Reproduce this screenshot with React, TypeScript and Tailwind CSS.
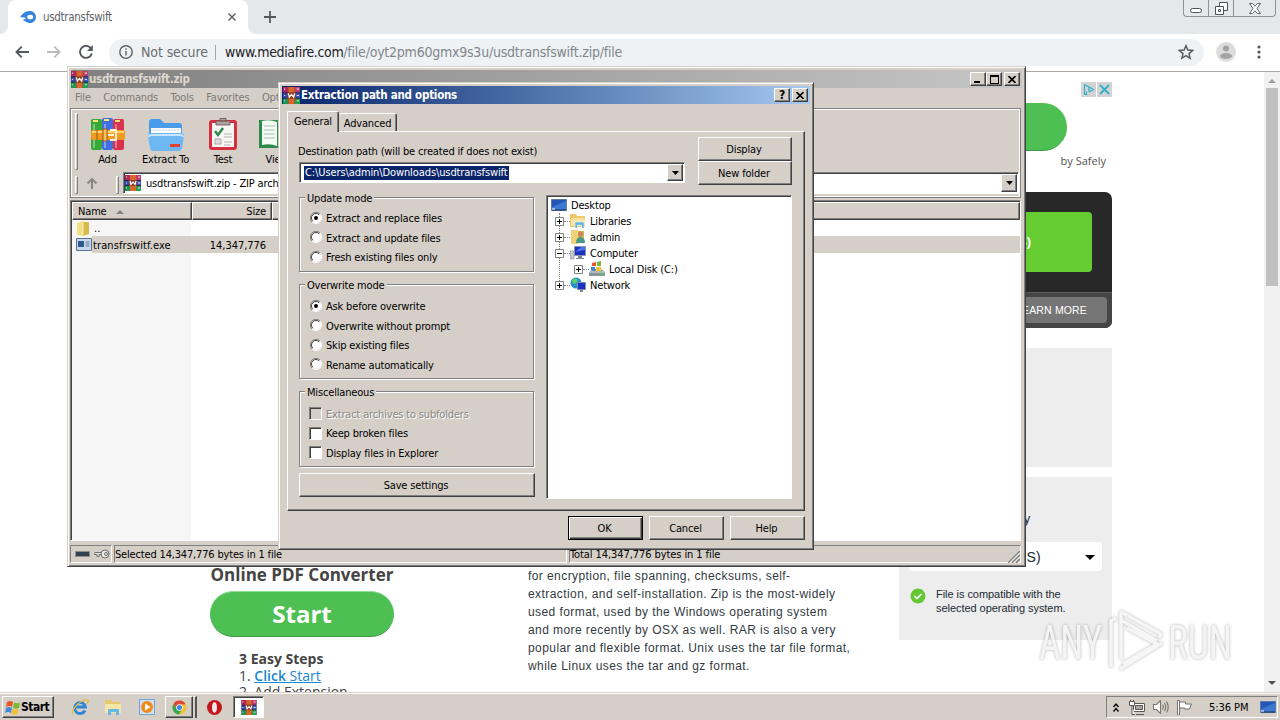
import type { ReactNode } from 'react'

const raised =
  'border border-t-white border-l-white border-r-[#404040] border-b-[#404040] shadow-[inset_-1px_-1px_0_#808080]'
const sunken =
  'border border-t-[#808080] border-l-[#808080] border-r-white border-b-white shadow-[inset_1px_1px_0_#404040]'
const thinSunken = 'border border-t-[#808080] border-l-[#808080] border-r-white border-b-white'
const frame =
  'border border-t-[#d5cfc8] border-l-[#d5cfc8] border-r-[#404040] border-b-[#404040] shadow-[inset_1px_1px_0_#fff,inset_-1px_-1px_0_#808080]'
const openSans = "[font-family:'Open_Sans',sans-serif] [font-stretch:normal] tracking-normal"
const arial = "[font-family:'Liberation_Sans',sans-serif]"

const RarIcon = ({ className = 'h-[17px] w-[17px]' }: { className?: string }) => (
  <svg viewBox="0 0 16 16" className={`shrink-0 ${className}`}>
    <rect width="16" height="16" fill="#2b2440" />
    <path d="M0 0h5v5H0z" fill="#b3285c" />
    <path d="M0 6h5v4H0z" fill="#2d4fc0" />
    <path d="M0 11h5v5H0z" fill="#1f9450" />
    <path d="M11 0h5v5h-5z" fill="#c23a72" />
    <path d="M11 6h5v4h-5z" fill="#315bd0" />
    <path d="M11 11h5v5h-5z" fill="#22a050" />
    <path d="M5 0h6v16H5z" fill="#d9662a" />
    <path d="M4 5h8v6H4z" fill="#8c3b22" />
    <path d="M5 6l1 3.500L8 7l2 2.500L11 6" fill="none" stroke="#fff" strokeWidth="1.200" />
    <path d="M1 2h1M1 8h1M1 13h1M13 2h2M13 8h2M13 13h2" stroke="#e8e0ea" />
  </svg>
)

const DownTriangle = () => (
  <svg viewBox="0 0 7 4" className="h-1 w-[7px]">
    <path d="M0 0h7L3.500 4z" fill="#000" />
  </svg>
)

const DropButton = () => (
  <span className={`flex w-4 shrink-0 items-center justify-center self-stretch bg-[#d5cfc8] ${raised}`}>
    <DownTriangle />
  </span>
)

const CaptionButton = ({ children }: { children: ReactNode }) => (
  <span className={`flex h-[14px] w-4 items-center justify-center bg-[#d5cfc8] ${raised}`}>{children}</span>
)

const CloseGlyph = () => (
  <svg viewBox="0 0 8 7" className="h-[7px] w-2">
    <path d="M.5 0l7 7M7.500 0l-7 7" stroke="#000" strokeWidth="1.600" />
  </svg>
)

const WinButton = ({ children, className = '' }: { children: ReactNode; className?: string }) => (
  <button
    type="button"
    className={`flex h-6 items-center justify-center bg-[#d5cfc8] pr-[2px] pt-px ${raised} ${className}`}
  >
    {children}
  </button>
)

/* ---------- browser ---------- */

const TabStrip = () => (
  <div className="flex h-[34px] shrink-0 items-start bg-[#e4e8eb]">
    <div className="h-[34px] w-2 bg-white">
      <div className="h-full w-full rounded-br-lg bg-[#e4e8eb]" />
    </div>
    <div className="flex h-[34px] w-60 items-center rounded-t-lg bg-white pl-3 pr-3">
      <svg viewBox="0 0 16 12" className="h-3 w-4">
        <path
          d="M0 6.500C2 3 5 0 9.500 0 13.500 0 16 2.700 16 6s-2.600 6-6 6c-3.500 0-4.500-2.500-8-3 2-.2 3.500-1 4-2C4.500 7 2 6 0 6.500z"
          fill="#3384e0"
        />
        <ellipse cx="10.200" cy="6" rx="3" ry="2.300" fill="#fff" />
      </svg>
      <span className="ml-[7px] text-[11.500px] tracking-[-0.3px] text-[#5f6368]">usdtransfswift</span>
      <svg viewBox="0 0 8 8" className="ml-auto h-2 w-2">
        <path d="M.5.5l7 7M7.500.5l-7 7" stroke="#5f6368" strokeWidth="1.500" />
      </svg>
    </div>
    <div className="h-[34px] w-2 bg-white">
      <div className="h-full w-full rounded-bl-lg bg-[#e4e8eb]" />
    </div>
    <svg viewBox="0 0 12 12" className="ml-2 mt-[11px] h-3 w-3">
      <path d="M6 0v12M0 6h12" stroke="#55595d" strokeWidth="1.800" />
    </svg>
    <div className="ml-auto mr-1 flex h-[17px] w-[93px] rounded-b border border-t-0 border-[#8e9396]">
      <span className="flex w-[25px] items-center justify-center border-r border-[#8e9396]">
        <span className="mt-1 h-[5px] w-3 rounded-sm border border-[#4b5157] bg-white" />
      </span>
      <span className="flex w-[25px] items-center justify-center border-r border-[#8e9396]">
        <svg viewBox="0 0 13 13" className="h-[13px] w-[13px]" fill="#fff" stroke="#4b5157">
          <path d="M4.500.5h8v8h-8z" />
          <path d="M.5 4.500h8v8h-8zM3.500 7.500h2v2h-2z" />
        </svg>
      </span>
      <span className="flex flex-1 items-center justify-center">
        <svg viewBox="0 0 12 11" className="h-[11px] w-3">
          <path
            d="M.5.5h3L6 3.200 8.500.5h3L8 5.500l3.500 5h-3L6 7.800 3.500 10.500h-3L4 5.500z"
            fill="#fff"
            stroke="#4b5157"
            strokeWidth=".9"
          />
        </svg>
      </span>
    </div>
  </div>
)

const AddressBar = () => (
  <div className="flex h-[38px] shrink-0 items-center border-b border-[#a9a9a9] bg-white pb-px pl-[15px]">
    <svg viewBox="0 0 14 12" className="h-3 w-[14px]" fill="none" stroke="#55595d" strokeWidth="1.800">
      <path d="M14 6H1.500M6.700.700L1.400 6l5.300 5.300" />
    </svg>
    <svg viewBox="0 0 14 12" className="ml-[18px] h-3 w-[14px]" fill="none" stroke="#b9bbbd" strokeWidth="1.800">
      <path d="M0 6h12.500M7.300.700L12.600 6l-5.300 5.300" />
    </svg>
    <svg viewBox="0 0 14 14" className="ml-[18px] h-[14px] w-[14px]">
      <path d="M12 3.500A6 6 0 1 0 12.800 8.500" fill="none" stroke="#55595d" strokeWidth="1.900" />
      <path d="M13.800 0v6H8z" fill="#55595d" />
    </svg>
    <div className="ml-4 flex h-[27px] w-[1095px] items-center rounded-full bg-[#eff2f5] pl-[10px] pr-[10px] text-[14px]">
      <svg viewBox="0 0 14 14" className="h-[14px] w-[14px]" fill="none" stroke="#5f6368" strokeWidth="1.400">
        <circle cx="7" cy="7" r="6.200" />
        <path d="M7 6v4.500M7 3.300v1.500" />
      </svg>
      <span className="ml-2 w-[67px] whitespace-nowrap tracking-[-0.1px] text-[#696d71]">Not secure</span>
      <span className="ml-[7px] h-[15px] w-px bg-[#a5a8ab]" />
      <span className="ml-[9px] whitespace-nowrap tracking-[-0.35px] text-[#202124]">
        www.mediafire.com
        <span className="tracking-[-0.23px] text-[#80868b]">/file/oyt2pm60gmx9s3u/usdtransfswift.zip/file</span>
      </span>
      <svg viewBox="0 0 24 24" className="ml-auto h-4 w-4" fill="none" stroke="#55595d" strokeWidth="2.200">
        <path d="M12 2.500l2.800 6.600 7.200.6-5.500 4.700 1.700 7L12 17.600l-6.200 3.800 1.700-7L2 9.700l7.200-.6z" />
      </svg>
    </div>
    <svg viewBox="0 0 20 20" className="ml-3 h-5 w-5">
      <circle cx="10" cy="10" r="10" fill="#dcdcdc" />
      <circle cx="10" cy="6.500" r="3" fill="#a3a3a3" />
      <ellipse cx="10" cy="14" rx="6" ry="3" fill="#a3a3a3" />
    </svg>
    <svg viewBox="0 0 4 14" className="ml-[21px] h-[14px] w-1" fill="#55595d">
      <circle cx="2" cy="2" r="1.600" />
      <circle cx="2" cy="7" r="1.600" />
      <circle cx="2" cy="12" r="1.600" />
    </svg>
  </div>
)

const articleLines = [
  'for encryption, file spanning, checksums, self-',
  'extraction, and self-installation. Zip is the most-widely',
  'used format, used by the Windows operating system',
  'and more recently by OSX as well. RAR is also a very',
  'popular and flexible format. Unix uses the tar file format,',
  'while Linux uses the tar and gz format.',
]

const ConverterAd = () => (
  <div className={`ml-[210px] w-[184px] shrink-0 pt-[491px] text-[#444] ${openSans}`}>
    <p className="whitespace-nowrap text-center text-[17px] font-bold leading-6">Online PDF Converter</p>
    <div className="mt-1 flex h-[46px] items-center justify-center rounded-full border-t border-b border-t-[#8fdc93] border-b-[#3f9a45] bg-[#4dbf53] text-[24px] font-bold text-white">
      Start
    </div>
    <div className="ml-[29px] mt-[14px] whitespace-nowrap text-[14px] leading-[16.500px]">
      <p className="font-bold">3 Easy Steps</p>
      <p>
        1.{' '}
        <span className="text-[#1a86cc] underline">
          <b className="font-semibold">Click</b> Start
        </span>
      </p>
      <p>2. Add Extension</p>
    </div>
  </div>
)

const SideColumn = () => (
  <div className={`ml-[49px] flex w-[213px] shrink-0 flex-col pt-[10px] ${arial}`}>
    <div className="flex justify-end gap-px">
      <svg viewBox="0 0 15 15" className="h-[15px] w-[15px]">
        <path d="M0 0h15v15H0z" fill="#d3d3d6" />
        <path d="M3.500 2.500v10h2V9.500M3.500 2.500L12.500 7.500 8 10M8 5.500V10" fill="none" stroke="#2fb1c5" strokeWidth="1.200" />
      </svg>
      <svg viewBox="0 0 15 15" className="h-[15px] w-[15px]">
        <path d="M0 0h15v15H0z" fill="#d3d3d6" />
        <path d="M3 3l9 9M12 3l-9 9" stroke="#2fb1c5" strokeWidth="1.800" />
      </svg>
    </div>
    <div className="mr-[45px] mt-[6px] h-12 rounded-full border-b border-[#3f9a45] bg-[#4dbf53]" />
    <p className={`mr-[6px] mt-[2px] text-right text-[11px] leading-4 text-[#555] ${openSans}`}>by Safely</p>
    <div className="mt-[23px] flex h-[136px] flex-col overflow-hidden rounded-[7px] bg-[#282828]">
      <div className="mr-5 mt-5 flex h-[60px] items-center justify-end rounded bg-[#65cd32] pr-[61px] text-[13px] font-bold text-white">
        (13.67MB)
      </div>
      <div className="mt-5 flex-1 border-t border-[#5c5c5c] bg-[#454545] px-[5px] pt-1">
        <div className="flex h-[26px] items-center justify-end rounded-sm bg-[#757575] pr-5 text-[10.500px] tracking-[0.15px] text-white">
          LEARN MORE
        </div>
      </div>
    </div>
    <div className="mt-5 h-[119px] bg-[#ededed]" />
    <div className="mt-[10px] h-[163px] bg-[#ededed] pl-[10px] pr-[10px] pt-[34px] text-[#222b33]">
      <p className="pr-[72px] text-right text-[13px] leading-4">Compatibility</p>
      <div className="mt-[15px] flex h-[29px] items-center rounded-sm bg-white pr-[7px] pt-px text-[14px]">
        <span className="w-[132px] text-right tracking-[0.3px]">Windows (OS)</span>
        <svg viewBox="0 0 10 5" className="ml-auto h-[5px] w-[10px]">
          <path d="M0 0h10L5 5z" fill="#000" />
        </svg>
      </div>
      <div className="mt-4 flex text-[11px] leading-[14px]">
        <svg viewBox="0 0 16 16" className="ml-px mt-px h-4 w-4">
          <circle cx="8" cy="8" r="7.500" fill="#63c832" />
          <path d="M4.500 8l2.500 2.500L11.500 6" fill="none" stroke="#fff" strokeWidth="1.700" />
        </svg>
        <p className="ml-[10px] whitespace-nowrap tracking-[-0.05px]">
          File is compatible with the
          <br />
          selected operating system.
        </p>
      </div>
    </div>
  </div>
)

const ScrollBar = () => (
  <div className="ml-auto flex w-4 shrink-0 flex-col items-center bg-[#f1f1f1]">
    <svg viewBox="0 0 8 4" className="mt-[7px] h-1 w-2">
      <path d="M4 0l4 4H0z" fill="#a0a0a0" />
    </svg>
    <div className="mt-[5px] h-[198px] w-3 bg-[#c1c1c1]" />
    <svg viewBox="0 0 8 4" className="mb-[7px] mt-auto h-1 w-2">
      <path d="M0 0h8L4 4z" fill="#505050" />
    </svg>
  </div>
)

const Watermark = () => (
  <svg
    viewBox="0 0 200 66"
    className="absolute left-[1036px] top-[608px] h-[66px] w-[200px] drop-shadow-[0_0_1.500px_rgba(0,0,0,0.3)]"
  >
    <g fill="#f4f4f4" fontFamily="Roboto, sans-serif" fontSize="49" fontWeight="400">
      <text x="3" y="51" textLength="63" lengthAdjust="spacingAndGlyphs">
        ANY
      </text>
      <text x="132" y="51" textLength="64" lengthAdjust="spacingAndGlyphs">
        RUN
      </text>
    </g>
    <g fill="none" stroke="#f6f6f6" strokeWidth="3.500" strokeLinejoin="round">
      <path d="M80 10l-5 3v46M85 51V4l40 22-2 4M91 20l30 16-34 20M85 12l36 21M84 61l42-26" />
    </g>
  </svg>
)

/* ---------- archive window ---------- */

const BooksIcon = () => (
  <svg viewBox="0 0 34 34" className="h-[34px] w-[34px]">
    <rect x="0" y="2" width="11" height="31" rx="2" fill="#38a839" />
    <rect x="11" y="1" width="11" height="32" rx="2" fill="#3f6fe0" />
    <rect x="22" y="2" width="11" height="31" rx="2" fill="#d8324e" />
    <path d="M2 4h5M13 3h5M24 4h5" stroke="#ffe270" strokeWidth="2" />
    <path d="M3 7v24M14 7v24M25 7v24" stroke="#fff" strokeOpacity=".35" strokeWidth="2" />
    <rect x="0" y="13" width="34" height="10" rx="2" fill="#f09a24" />
    <path d="M1 15h32" stroke="#ffd36b" strokeWidth="2" />
    <path d="M12 12h4v12h-4zM6 13v10" stroke="#9a5710" fill="#f7c35a" />
    <path d="M19 13h6v10h-6M17 18h6" fill="none" stroke="#fff3dc" strokeWidth="1.800" />
  </svg>
)

const FolderIcon = () => (
  <svg viewBox="0 0 36 34" className="h-[34px] w-9">
    <path d="M1 5q0-3 3-3h8l4 4h15q3 0 3 3v9H1z" fill="#4a9cea" />
    <path d="M3 11h30v10H3z" fill="#fff" />
    <path d="M5 13h26" stroke="#b9c9d8" strokeDasharray="2 1" />
    <path d="M0 19q0-3 3-3h30q3 0 3 3l-2 12q-.5 3-3.500 3h-25q-3 0-3.500-3z" fill="#6db8f4" />
    <path d="M1 20q0-2 3-2h28q3 0 3 2" fill="none" stroke="#c6e6ff" strokeWidth="2" />
    <rect x="22" y="27" width="10" height="3" fill="#e0432f" />
  </svg>
)

const TestIcon = () => (
  <svg viewBox="0 0 30 34" className="h-[34px] w-[30px]">
    <rect x="1" y="3" width="28" height="30" rx="3" fill="#d62f42" />
    <path d="M4 6h22v24H4z" fill="#f8f6f4" />
    <path d="M8 4h14v4H8zM12 1.500h6V4h-6z" fill="#a9a4a2" stroke="#6e4848" strokeWidth=".8" />
    <path d="M7 14l3 4 5-7" fill="none" stroke="#298a4c" strokeWidth="2.500" />
    <path d="M7 22h6v5H7z" fill="#ddd" stroke="#aaa" />
    <path d="M16 17h8M16 20h8M16 25h8M16 28h6" stroke="#b7b7b7" />
  </svg>
)

const ViewIcon = () => (
  <svg viewBox="0 0 36 34" className="h-[34px] w-9">
    <path d="M0 3h18v28H0z" fill="#2b8a4c" />
    <path d="M3 4q8-2 15 1v24q-7-3-15-1z" fill="#f4fbf5" />
    <path d="M5 9h11M5 13h11M5 17h11M5 21h11" stroke="#a9bfb0" />
    <path d="M18 3h18v28H18z" fill="#2b8a4c" />
  </svg>
)

const toolbarItems = [
  { label: 'Add', icon: <BooksIcon />, width: 'w-[59px]' },
  { label: 'Extract To', icon: <FolderIcon />, width: 'w-[57px]' },
  { label: 'Test', icon: <TestIcon />, width: 'w-[58px]' },
  { label: 'View', icon: <ViewIcon />, width: 'w-[50px]' },
]

const Gripper = ({ className }: { className: string }) => (
  <span
    className={`w-[3px] shrink-0 border border-t-white border-l-white border-r-[#808080] border-b-[#808080] ${className}`}
  />
)

const FileList = () => (
  <div className={`-ml-px mr-px mt-[2px] flex h-[341px] flex-col bg-white ${sunken}`}>
    <div className="ml-px mt-px flex h-[18px] shrink-0 bg-[#d5cfc8]">
      <div className={`flex w-[120px] items-center pl-[5px] pt-px ${raised}`}>
        Name
        <svg viewBox="0 0 8 4" className="ml-[9px] h-1 w-2">
          <path d="M4 0l4 4H0z" fill="#808080" />
        </svg>
      </div>
      <div className={`flex w-[80px] items-center justify-end pr-[5px] pt-px ${raised}`}>Size</div>
      <div className={`flex-1 ${raised}`} />
    </div>
    <div className="ml-px flex flex-1">
      <div className="flex w-[119px] flex-col bg-[#f6f6f6]">
        <div className="flex h-4 items-center pl-[5px]">
          <svg viewBox="0 0 13 15" className="h-[15px] w-[13px]">
            <path d="M0 2l6-2v15l-6-1z" fill="#f3df83" />
            <path d="M6 1h6v12l-6 2z" fill="#d8b94c" />
            <path d="M6 2v12" stroke="#fff6c5" />
          </svg>
          <span className="ml-1 pt-[2px] tracking-normal">..</span>
        </div>
        <div className="flex h-[17px] items-center pl-1">
          <svg viewBox="0 0 16 13" className="h-[13px] w-4 shrink-0">
            <path d="M.5.5h15v12H.5z" fill="#c9d8ea" stroke="#56708f" />
            <path d="M2 3h6v6H2z" fill="#2f5a8c" />
            <path d="M9.500 4h4M9.500 6h4M9.500 8h4" stroke="#5e7ca0" />
          </svg>
          <span className="flex h-[17px] flex-1 items-center bg-[#d5cfc8] pl-px pt-[2px] tracking-[0.1px]">
            transfrswitf.exe
          </span>
        </div>
      </div>
      <div className="flex flex-1 flex-col pt-4">
        <div className="flex h-[17px] items-center bg-[#d5cfc8] pt-[2px]">
          <span className="w-[75px] text-right tracking-[-0.05px]">14,347,776</span>
        </div>
      </div>
    </div>
  </div>
)

const ArchiveWindow = () => (
  <section className={`absolute left-[67px] top-[66px] flex h-[501px] w-[959px] flex-col bg-[#d5cfc8] p-[3px] ${frame}`}>
    <div className="flex h-[18px] shrink-0 items-center bg-linear-to-r from-[#808080] to-[#c6c6c6] pr-[2px]">
      <RarIcon />
      <span className="ml-px text-[11.500px] font-bold tracking-[-0.28px] text-[#dcd8d0]">usdtransfswift.zip</span>
      <span className="ml-auto mr-[2px] flex">
        <CaptionButton>
          <span className="mt-[6px] mr-[2px] h-[2px] w-[6px] bg-black" />
        </CaptionButton>
        <CaptionButton>
          <span className="h-[9px] w-[9px] border border-t-2 border-black" />
        </CaptionButton>
      </span>
      <CaptionButton>
        <CloseGlyph />
      </CaptionButton>
    </div>
    <nav className="flex h-5 shrink-0 items-center gap-[12.500px] pl-1 text-[#7d7a76]">
      <span>File</span>
      <span>Commands</span>
      <span>Tools</span>
      <span>Favorites</span>
      <span>Options</span>
    </nav>
    <div className="-ml-px mr-px flex h-[90px] shrink-0 flex-col border border-[#808080] pl-1 shadow-[inset_1px_1px_0_#fff,inset_-1px_-1px_0_#fff]">
      <div className="flex h-[61px] shrink-0">
        <Gripper className="mt-1" />
        <div className="flex">
          {toolbarItems.map((item) => (
            <div key={item.label} className={`flex shrink-0 flex-col items-center pt-2 ${item.width}`}>
              {item.icon}
              <span className="mt-[2px] whitespace-nowrap leading-[14px]">{item.label}</span>
            </div>
          ))}
        </div>
      </div>
      <div className="mt-px flex h-[23px] pt-px">
        <Gripper className="mt-1" />
        <svg viewBox="0 0 12 11" className="ml-[8px] mt-[6px] h-[11px] w-3">
          <path d="M6 11V1M1.500 5.500L6 1l4.500 4.500" fill="none" stroke="#8a8783" strokeWidth="2" />
        </svg>
        <Gripper className="ml-[18px] mt-1" />
        <div className={`ml-1 mr-px flex h-[22px] flex-1 items-center bg-white p-px ${sunken}`}>
          <RarIcon className="h-4 w-4" />
          <span className="ml-[5px] pt-[2px]">usdtransfswift.zip - ZIP archive</span>
          <span className="ml-auto flex self-stretch">
            <DropButton />
          </span>
        </div>
      </div>
    </div>
    <FileList />
    <footer className="-ml-px mr-px mt-1 flex h-[18px] gap-[2px]">
      <div className={`flex w-[42px] items-center gap-1 pl-1 ${thinSunken}`}>
        <span className="h-[6px] w-[15px] border border-[#8d8d8d] bg-[#34424f]" />
        <svg viewBox="0 0 16 10" className="h-[10px] w-4" fill="#e8e8e8" stroke="#707070">
          <path d="M8 3.500H1l-.5 2H3v2h2v-2h3" />
          <circle cx="11" cy="5" r="4" />
          <circle cx="12" cy="5" r="1.500" />
        </svg>
      </div>
      <div className={`flex w-[453px] items-center pt-px ${thinSunken}`}>Selected 14,347,776 bytes in 1 file</div>
      <div className={`flex flex-1 items-center justify-between pt-px tracking-[-0.08px] ${thinSunken}`}>
        Total 14,347,776 bytes in 1 file
        <svg viewBox="0 0 12 12" className="mt-1 h-3 w-3">
          <path d="M12 0L0 12M12 4l-8 8M12 8l-4 4" stroke="#808080" strokeWidth="1.500" />
          <path d="M12 1.500L1.500 12M12 5.500L5.500 12" stroke="#fff" strokeWidth=".8" />
        </svg>
      </div>
    </footer>
  </section>
)

/* ---------- extraction dialog ---------- */

const Radio = ({ checked }: { checked: boolean }) => (
  <svg viewBox="0 0 12 12" className="h-3 w-3 shrink-0">
    <circle cx="6" cy="6" r="5" fill="#fff" />
    <path d="M2 10A5.500 5.500 0 0 1 10 2" fill="none" stroke="#808080" />
    <path d="M2.800 9.200A4.500 4.500 0 0 1 9.200 2.800" fill="none" stroke="#404040" />
    <path d="M10 2A5.500 5.500 0 0 1 2 10" fill="none" stroke="#fff" />
    {checked && <circle cx="6" cy="6" r="2" fill="#000" />}
  </svg>
)

const Group = ({ title, className, children }: { title: string; className: string; children: ReactNode }) => (
  <fieldset
    className={`relative flex w-[235px] flex-col border border-[#808080] pl-[10px] shadow-[1px_1px_0_#fff,inset_1px_1px_0_#fff] ${className}`}
  >
    <span className="absolute -top-[6px] left-[5px] whitespace-nowrap bg-[#d5cfc8] px-[2px] leading-[14px]">{title}</span>
    {children}
  </fieldset>
)

const RadioRow = ({ label, checked = false }: { label: string; checked?: boolean }) => (
  <label className="flex h-[19.500px] items-center">
    <Radio checked={checked} />
    <span className="ml-1 whitespace-nowrap pt-[3px]">{label}</span>
  </label>
)

const CheckRow = ({ label, disabled = false }: { label: string; disabled?: boolean }) => (
  <label className="-ml-px flex h-[19.500px] items-center">
    <span className={`h-[13px] w-[13px] ${sunken} ${disabled ? 'bg-[#d5cfc8]' : 'bg-white'}`} />
    <span
      className={`ml-1 whitespace-nowrap pt-[2px] ${disabled ? 'text-[#8a8783] [text-shadow:1px_1px_0_#fff]' : ''}`}
    >
      {label}
    </span>
  </label>
)

const DesktopIcon = () => (
  <svg viewBox="0 0 16 13" className="h-[13px] w-4">
    <path d="M.5.5h15v11H.5z" fill="#2457b5" stroke="#5b7ca8" />
    <path d="M1 8L15 2v9H1z" fill="#3d78d2" />
    <path d="M1 11h14" stroke="#162c55" />
    <path d="M1 10h3" stroke="#fff" />
  </svg>
)

const LibrariesIcon = () => (
  <svg viewBox="0 0 16 16" className="h-4 w-4">
    <path d="M0 1h6l1 2h8v11H0z" fill="#ecc868" />
    <path d="M1 5h14v8H1z" fill="#f7e3a0" />
    <path d="M5 15V9h9v6h-2.500v-3h-4v3z" fill="#58b4e2" stroke="#fff" strokeWidth=".5" />
  </svg>
)

const UserIcon = () => (
  <svg viewBox="0 0 16 16" className="h-4 w-4">
    <path d="M1 1h7v14H1z" fill="#f0d278" />
    <path d="M8 2h6v12H8z" fill="#d9b34f" />
    <circle cx="10.500" cy="5" r="2.500" fill="#c98359" />
    <path d="M6 14q0-6 4.500-6t4.500 6z" fill="#4c9a86" />
  </svg>
)

const ComputerIcon = () => (
  <svg viewBox="0 0 16 14" className="h-[14px] w-4">
    <path d="M0 5h4v8H0z" fill="#c6cbd2" stroke="#828a94" strokeWidth=".6" />
    <path d="M4.500.5h11v9h-11z" fill="#1c31c4" stroke="#8b95a6" />
    <path d="M5 6l6-5h4v3z" fill="#4c72f0" />
    <path d="M8 10h4v2h2v1H6v-1h2z" fill="#7c8591" />
  </svg>
)

const DiskIcon = () => (
  <svg viewBox="0 0 16 16" className="h-4 w-4">
    <path d="M0 11l4-3h8l4 3v4H0z" fill="#8b959c" />
    <path d="M0 11h16" stroke="#d5dde2" />
    <path d="M11 13h3" stroke="#46d046" strokeWidth="1.500" />
    <path d="M3 2l4-1v4H3z" fill="#e7582d" />
    <path d="M8 1l4-1v5H8z" fill="#76bb34" />
    <path d="M2 6h4v4l-4-1z" fill="#3a84dc" />
    <path d="M7 6h5v4H7z" fill="#f5c32e" />
  </svg>
)

const NetworkIcon = () => (
  <svg viewBox="0 0 16 16" className="h-4 w-4">
    <circle cx="6" cy="6" r="5.500" fill="#2390d0" />
    <path d="M2 3q3-3 6 0-1 3-4 4-2-1-2-4z" fill="#61d06a" />
    <path d="M7.500 5.500h8v7h-8z" fill="#1c31c4" stroke="#7d8ba0" />
    <path d="M10 13h3v2h-3z" fill="#7c8591" />
  </svg>
)

const treeItems = [
  { label: 'Libraries', icon: <LibrariesIcon />, sign: '+', nested: false },
  { label: 'admin', icon: <UserIcon />, sign: '+', nested: false },
  { label: 'Computer', icon: <ComputerIcon />, sign: '-', nested: false },
  { label: 'Local Disk (C:)', icon: <DiskIcon />, sign: '+', nested: true },
  { label: 'Network', icon: <NetworkIcon />, sign: '+', nested: false },
]

const Expander = ({ sign }: { sign: string }) => (
  <svg viewBox="0 0 9 9" className="h-[9px] w-[9px] shrink-0">
    <path d="M.5.5h8v8h-8z" fill="#fff" stroke="#808080" />
    <path d={sign === '+' ? 'M2 4.500h5M4.500 2v5' : 'M2 4.500h5'} stroke="#000" />
  </svg>
)

const FolderTree = () => (
  <div className={`h-[304px] w-[246px] bg-white pl-[3px] pt-px ${sunken}`}>
    <div className="flex h-4 items-center pl-px">
      <DesktopIcon />
      <span className="ml-1 pt-[2px]">Desktop</span>
    </div>
    <div className="relative">
      <span className="absolute left-[9px] top-0 h-[72px] border-l border-dotted border-[#808080]" />
      {treeItems.map((item) => (
        <div key={item.label} className={`relative flex h-4 items-center ${item.nested ? 'pl-6' : 'pl-[5px]'}`}>
          <Expander sign={item.sign} />
          <span className="w-[6px] border-t border-dotted border-[#808080]" />
          <span className="flex w-4 justify-center">{item.icon}</span>
          <span className="ml-1 whitespace-nowrap pt-[2px]">{item.label}</span>
        </div>
      ))}
    </div>
  </div>
)

const ExtractDialog = () => (
  <section className={`absolute left-[278px] top-[82px] flex h-[468px] w-[536px] flex-col bg-[#d5cfc8] p-[3px] ${frame}`}>
    <div className="flex h-[18px] shrink-0 items-center bg-linear-to-r from-[#0a246a] to-[#a6caf0] pl-px pr-[2px]">
      <RarIcon />
      <span className="ml-px text-[11.500px] font-bold tracking-[-0.25px] text-white">Extraction path and options</span>
      <span className="ml-auto flex gap-[2px]">
        <CaptionButton>
          <span className="text-[12px] font-bold leading-3">?</span>
        </CaptionButton>
        <CaptionButton>
          <CloseGlyph />
        </CaptionButton>
      </span>
    </div>
    <div className="relative z-10 ml-[5px] mt-[7px] flex h-5 shrink-0 items-end">
      <div className="-mb-px flex h-[21px] w-[52px] items-center justify-center rounded-t-[2px] border border-b-0 border-t-white border-l-white border-r-[#404040] bg-[#d5cfc8] shadow-[inset_-1px_0_0_#808080]">
        General
      </div>
      <div className="flex h-[18px] w-[58px] items-center justify-center rounded-t-[2px] border border-b-0 border-l-0 border-t-white border-r-[#404040] pt-[2px] shadow-[inset_-1px_0_0_#808080]">
        Advanced
      </div>
    </div>
    <div className={`mx-[5px] flex h-[380px] w-[518px] shrink-0 flex-col pl-[11px] ${raised}`}>
      <div className="flex pt-[5px]">
        <div className="w-[386px]">
          <p className="-ml-px mt-[7px] h-[18px] whitespace-nowrap leading-4">
            Destination path (will be created if does not exist)
          </p>
          <div className={`flex h-[21px] items-center bg-white pl-1 pr-px py-px ${sunken}`}>
            <span className="h-[14px] bg-[#0a246a] px-px leading-[14px] tracking-[-0.1px] text-white">
              C:\Users\admin\Downloads\usdtransfswift
            </span>
            <span className="ml-auto flex self-stretch">
              <DropButton />
            </span>
          </div>
        </div>
        <div className="ml-[13px] flex w-[94px] flex-col">
          <WinButton>Display</WinButton>
          <WinButton>New folder</WinButton>
        </div>
      </div>
      <div className="mt-[10px] flex">
        <div className="w-[236px] shrink-0 pt-[2px]">
          <Group title="Update mode" className="h-[75px] pt-[10px]">
            <RadioRow label="Extract and replace files" checked />
            <RadioRow label="Extract and update files" />
            <RadioRow label="Fresh existing files only" />
          </Group>
          <Group title="Overwrite mode" className="mt-[12px] h-[95px] pt-[11px]">
            <RadioRow label="Ask before overwrite" checked />
            <RadioRow label="Overwrite without prompt" />
            <RadioRow label="Skip existing files" />
            <RadioRow label="Rename automatically" />
          </Group>
          <Group title="Miscellaneous" className="mt-[12px] h-[76px] pt-[12px]">
            <CheckRow label="Extract archives to subfolders" disabled />
            <CheckRow label="Keep broken files" />
            <CheckRow label="Display files in Explorer" />
          </Group>
          <WinButton className="mt-[6px] w-[236px]">Save settings</WinButton>
        </div>
        <div className="ml-[11px]">
          <FolderTree />
        </div>
      </div>
    </div>
    <div className="mr-[5px] mt-[5px] flex justify-end gap-[6px]">
      <button
        type="button"
        className="flex h-6 w-[75px] items-center justify-center border border-black pr-[2px] pt-px shadow-[inset_1px_1px_0_#fff,inset_-1px_-1px_0_#404040,inset_-2px_-2px_0_#808080]"
      >
        OK
      </button>
      <WinButton className="w-[75px]">Cancel</WinButton>
      <WinButton className="w-[75px]">Help</WinButton>
    </div>
  </section>
)

/* ---------- taskbar ---------- */

const Taskbar = () => (
  <footer className="flex h-7 shrink-0 items-center border-t border-[#d5cfc8] bg-[#d5cfc8] pl-[2px] pr-[2px] pt-px shadow-[inset_0_1px_0_#fff]">
    <button
      type="button"
      className={`flex h-[22px] w-[52px] items-center pl-[2px] text-[12px] font-bold tracking-[-0.5px] ${raised}`}
    >
      <svg viewBox="0 0 16 15" className="h-[15px] w-4 shrink-0">
        <path d="M2 2q3-2 6 0L7 7Q4 5 1 7z" fill="#e5562b" />
        <path d="M9 2.500q3 1.500 6 0L14 8q-3 1.500-6 0z" fill="#7dba32" />
        <path d="M1 8q3-2 6 0l-1 5q-3-2-6 0z" fill="#4489dc" />
        <path d="M7.500 9q3 1.500 6 0l-1 5q-3 1.500-6 0z" fill="#f6c02d" />
      </svg>
      Start
    </button>
    <svg viewBox="0 0 18 18" className="ml-[17px] h-[18px] w-[18px]" fill="none">
      <path d="M14 12.500A5.500 5.500 0 1 1 14.500 9H5" stroke="#2c86d6" strokeWidth="2.800" />
      <path d="M2 16.500Q0 13 6 7t11-5q1 1-1 4" stroke="#e8b93a" strokeWidth="1.200" />
    </svg>
    <svg viewBox="0 0 18 18" className="ml-[15px] h-[18px] w-[18px]">
      <path d="M1 2h6l1 2h8v11H1z" fill="#e6c76a" />
      <path d="M1 6h16v9H1z" fill="#f6e6a6" />
      <path d="M4 17v-6h11v6h-3v-3H7v3z" fill="#66b9e4" />
    </svg>
    <svg viewBox="0 0 18 18" className="ml-4 h-[18px] w-[18px]">
      <path d="M1.500 1.500h15v15h-15z" fill="#cfe2f5" stroke="#6fa4d8" />
      <circle cx="9" cy="9" r="6" fill="#f08a1e" />
      <path d="M7 5.500v7L12.500 9z" fill="#fff" />
    </svg>
    <div className={`ml-[9px] flex h-[22px] w-7 items-center justify-center ${raised}`}>
      <svg viewBox="0 0 16 16" className="h-[15px] w-[15px]">
        <circle cx="8" cy="8" r="7.500" fill="#f2c52c" />
        <path d="M1.500 4.200A7.500 7.500 0 0 1 14.600 4.500L8 5 5 9.500z" fill="#dc4a38" />
        <path d="M1.300 4.500A7.500 7.500 0 0 0 7.500 15.500L10.500 10 6 10z" fill="#3aa655" />
        <circle cx="8" cy="8" r="3.500" fill="#fff" />
        <circle cx="8" cy="8" r="2.700" fill="#4285e8" />
      </svg>
    </div>
    <span className="h-[22px] w-[4px] border-r-2 border-t border-[#55524f] border-t-white" />
    <svg viewBox="0 0 16 16" className="ml-[10px] h-[15px] w-[15px]">
      <ellipse cx="8" cy="8" rx="8" ry="8" fill="#c4161c" />
      <ellipse cx="8" cy="8" rx="2.600" ry="5.500" fill="#f2eaea" />
    </svg>
    <div className={`ml-[11px] flex h-[22px] w-[31px] items-center justify-center bg-white ${sunken}`}>
      <RarIcon className="h-[15px] w-4" />
    </div>
    <div className={`ml-auto flex h-[22px] w-[172px] items-center ${thinSunken}`}>
      <svg viewBox="0 0 6 9" className="ml-[6px] h-[9px] w-[6px]" fill="none" stroke="#000" strokeWidth="1.300">
        <path d="M.5 4L3 1l2.500 3M.5 8.500L3 5.500l2.500 3" />
      </svg>
      <svg viewBox="0 0 16 15" className="ml-[10px] h-[15px] w-4" fill="#fff" stroke="#5b5854">
        <path d="M4.500 3.500h11v8h-11zM7 14.500h8" />
        <path d="M6.500 5.500h7v4h-7z" fill="#a9a6a2" />
        <path d="M.5 1.500h5v4h-5zM1.500 0v2M4.500 0v2M3 6v8.500h3" />
      </svg>
      <svg viewBox="0 0 16 14" className="ml-2 h-[14px] w-4" fill="none" stroke="#77736f" strokeWidth="1.100">
        <path d="M.5 4.500h3l4-4v13l-4-4h-3z" fill="#fff" />
        <path d="M9.500 4.500q1.500 2.500 0 5M11.500 3q2.500 4 0 8M13.500 1.500q3.500 5.500 0 11" />
      </svg>
      <svg viewBox="0 0 16 15" className="ml-[8px] h-[15px] w-4" fill="#fff" stroke="#77736f">
        <path d="M.5 15V.5h2V15z" />
        <path d="M2.500 2h6v2h6l-2 5h-5V8h-5z" />
      </svg>
      <span className="ml-[16px] whitespace-nowrap pt-px tracking-[-0.05px]">5:36 PM</span>
      <span className="ml-auto mr-[1px]">
        <DesktopIcon />
      </span>
    </div>
  </footer>
)

export default function App() {
  return (
    <div className="relative flex h-[720px] w-[1280px] flex-col overflow-hidden bg-white text-[11px] leading-[14px] tracking-[-0.17px] text-black [font-family:'DejaVu_Sans_Condensed','DejaVu_Sans',sans-serif] [font-stretch:condensed]">
      <TabStrip />
      <AddressBar />
      <main className="flex min-h-0 flex-1 overflow-hidden bg-white">
        <ConverterAd />
        <div
          className={`ml-[134px] w-[322px] shrink-0 whitespace-nowrap pt-[495px] text-[12px] leading-[18px] tracking-[0.42px] text-[#333a42] ${arial}`}
        >
          {articleLines.map((line) => (
            <p key={line}>{line}</p>
          ))}
        </div>
        <SideColumn />
        <ScrollBar />
      </main>
      <Taskbar />
      <Watermark />
      <ArchiveWindow />
      <ExtractDialog />
    </div>
  )
}
